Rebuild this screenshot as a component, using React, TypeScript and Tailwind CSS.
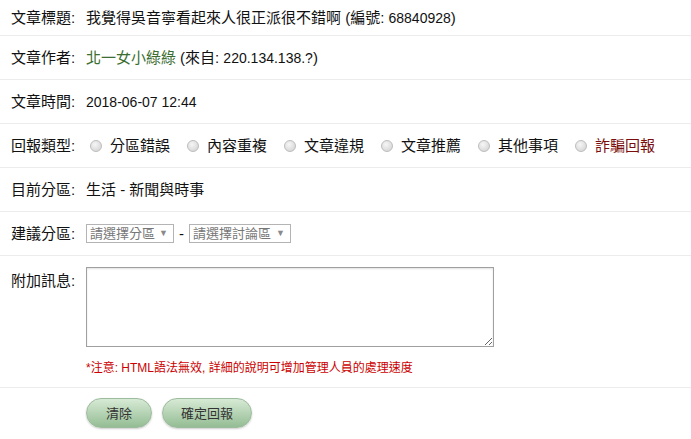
const font = { fontFamily: '"Liberation Sans", Arial, "Noto Sans CJK TC", sans-serif' };

const reportTypes = ["分區錯誤", "內容重複", "文章違規", "文章推薦", "其他事項", "詐騙回報"];

function Row({ label, children, first }: { label: string; children: React.ReactNode; first?: boolean }) {
  return (
    <div className={`flex items-center border-b border-[#ececec] ${first ? "h-[36px]" : "h-[44px]"}`}>
      <div className="w-[86px] shrink-0 pl-[11px]">{label}:</div>
      <div className="flex items-center">{children}</div>
    </div>
  );
}

function Radio() {
  return <span className="inline-block h-[12px] w-[12px] shrink-0 rounded-full border border-[#bdbdbd] bg-[radial-gradient(circle_at_40%_35%,#f6f6f6,#cfcfcf)]" />;
}

function Select({ text, width }: { text: string; width: string }) {
  return (
    <div className={`flex h-[19px] items-center justify-between border border-[#b4b4b4] bg-white pl-[3px] pr-[5px] text-[13px] text-[#777] ${width}`}>
      <span>{text}</span>
      <span className="text-[9px] text-[#8a8a8a]">▼</span>
    </div>
  );
}

export default function App() {
  return (
    <div className="h-[439px] w-[691px] overflow-hidden bg-white text-[15px] leading-none text-[#111]" style={font}>
      <Row label="文章標題" first>
        <span>我覺得吳音寧看起來人很正派很不錯啊 (編號: <span className="text-[14px]">68840928</span>)</span>
      </Row>
      <Row label="文章作者">
        <span className="text-[#3b6e30]">北一女小綠綠</span>
        <span className="ml-[4px]">(來自: <span className="text-[14px]">220.134.138.?</span>)</span>
      </Row>
      <Row label="文章時間">
        <span className="text-[14px]">2018-06-07 12:44</span>
      </Row>
      <Row label="回報類型">
        <div className="flex items-center">
          {reportTypes.map((t, i) => (
            <label key={t} className={`flex items-center ${i > 0 ? "ml-[17px]" : "ml-[4px]"}`}>
              <Radio />
              <span className={`ml-[8px] ${i === 5 ? "text-[#7a0e0e]" : ""}`}>{t}</span>
            </label>
          ))}
        </div>
      </Row>
      <Row label="目前分區">
        <span>生活 - 新聞與時事</span>
      </Row>
      <Row label="建議分區">
        <Select text="請選擇分區" width="w-[88px]" />
        <span className="mx-[5px]">-</span>
        <Select text="請選擇討論區" width="w-[102px]" />
      </Row>
      <div className="flex h-[132px] border-b border-[#ececec]">
        <div className="w-[86px] shrink-0 pl-[11px] pt-[17px]">附加訊息:</div>
        <div className="flex flex-col pt-[11px]">
          <textarea className="h-[80px] w-[408px] resize border border-[#a0a0a0] shadow-[inset_0_1px_2px_rgba(0,0,0,0.12)] outline-none" />
          <div className="mt-[15px] text-[12px] text-[#c00]">*注意: HTML語法無效, 詳細的說明可增加管理人員的處理速度</div>
        </div>
      </div>
      <div className="flex gap-[10px] pl-[86px] pt-[10px]">
        <button className="h-[30px] w-[66px] rounded-full border border-[#9dbb9d] bg-gradient-to-b from-[#d7ead5] to-[#94bd94] text-[13px] text-[#333] shadow-[0_1px_2px_rgba(0,0,0,0.2)]">清除</button>
        <button className="h-[30px] w-[90px] rounded-full border border-[#9dbb9d] bg-gradient-to-b from-[#d7ead5] to-[#94bd94] text-[13px] text-[#333] shadow-[0_1px_2px_rgba(0,0,0,0.2)]">確定回報</button>
      </div>
    </div>
  );
}
